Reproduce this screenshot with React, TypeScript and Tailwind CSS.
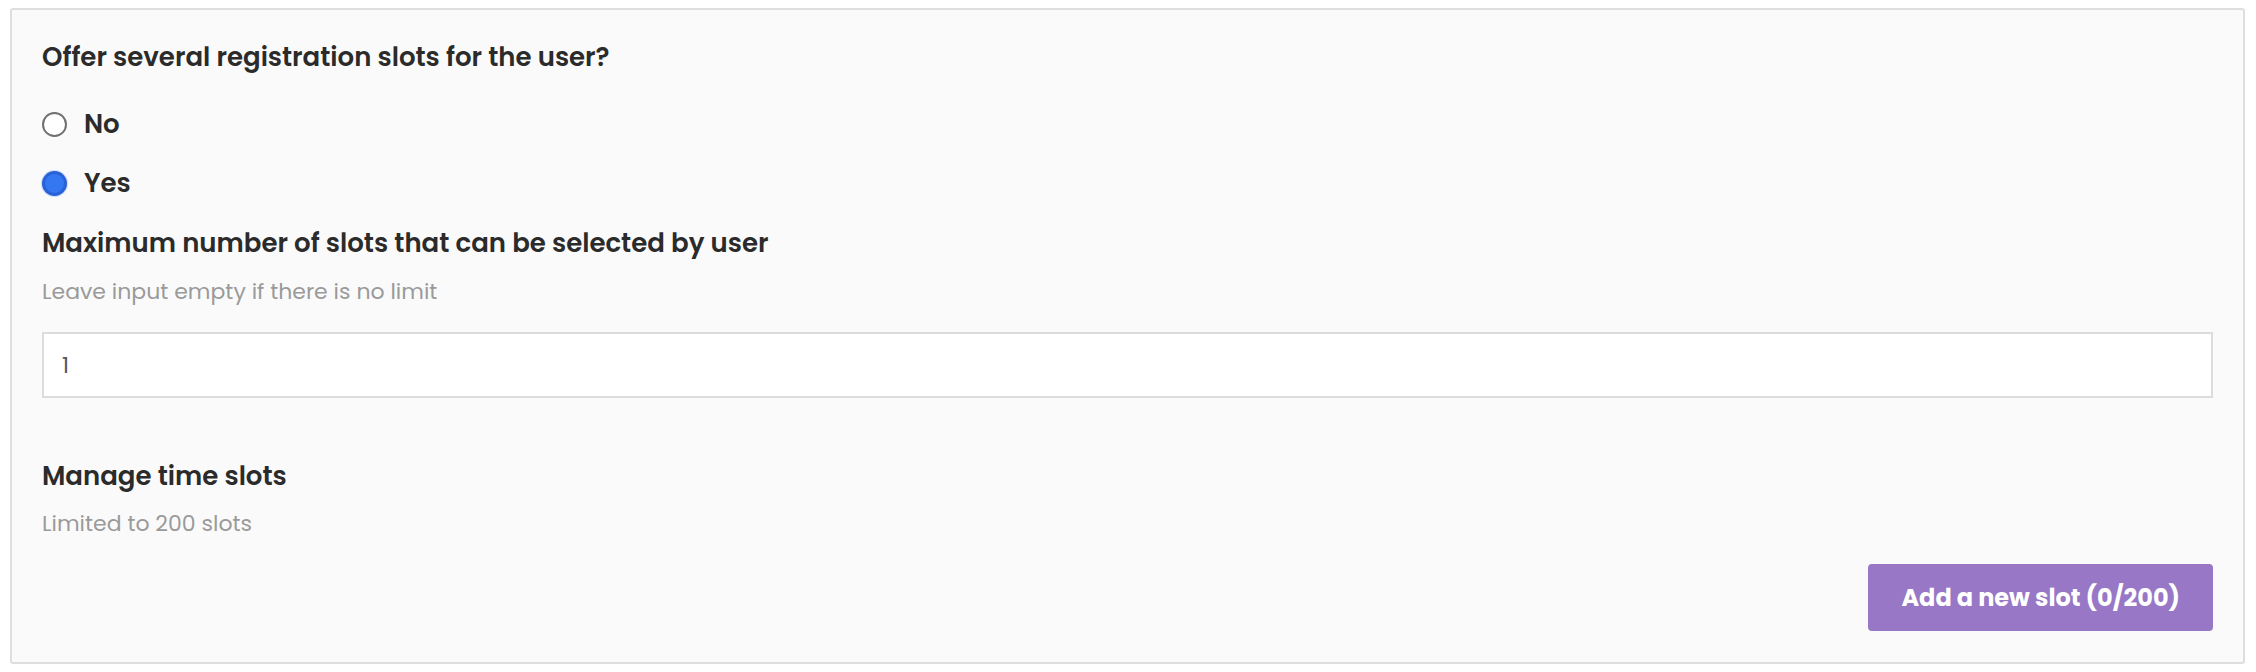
import { useState } from "react";

const font = { fontFamily: "Poppins, Inter, 'Noto Sans', sans-serif" };

function Radio({ checked, label, onSelect }: { checked: boolean; label: string; onSelect: () => void }) {
  return (
    <label className="flex h-8 cursor-pointer items-center gap-[17px]" onClick={onSelect}>
      {checked ? (
        <span className="flex h-[25px] w-[25px] items-center justify-center rounded-full bg-[#2a62d6] ring-1 ring-[#c9dafc]">
          <span className="h-[19px] w-[19px] rounded-full bg-[#3477f1]" />
        </span>
      ) : (
        <span className="h-[25px] w-[25px] rounded-full border-2 border-[#707070] bg-white" />
      )}
      <span className="text-[26px] font-semibold text-[#2b2b2b]">{label}</span>
    </label>
  );
}

export default function App() {
  const [several, setSeveral] = useState(true);
  const [max, setMax] = useState("1");

  return (
    <div className="min-h-[672px] bg-white pt-[8px] pr-[11px] pb-[9px] pl-[10px]" style={font}>
      <section className="rounded-[3px] border-2 border-[#dedede] bg-[#fafafa] px-[30px] pt-[31px] pb-[31px]">
        <h2 className="text-[26px] leading-8 font-semibold text-[#2b2b2b]">Offer several registration slots for the user?</h2>

        <div className="mt-[35px] flex flex-col gap-[27px]">
          <Radio checked={!several} label="No" onSelect={() => setSeveral(false)} />
          <Radio checked={several} label="Yes" onSelect={() => setSeveral(true)} />
        </div>

        <h3 className="mt-[28px] text-[26px] leading-8 font-semibold text-[#2b2b2b]">
          Maximum number of slots that can be selected by user
        </h3>
        <p className="mt-[19px] text-[22px] leading-7 text-[#9a9a9a]">Leave input empty if there is no limit</p>

        <input
          value={max}
          onChange={(e) => setMax(e.target.value)}
          className="mt-[26px] block h-[66px] w-full border-2 border-[#dcdcdc] bg-white px-[18px] text-[22px] text-[#555] outline-none"
        />

        <h3 className="mt-[62px] text-[26px] leading-8 font-semibold text-[#2b2b2b]">Manage time slots</h3>
        <p className="mt-[18px] text-[22px] leading-7 text-[#9a9a9a]">Limited to 200 slots</p>

        <div className="mt-[26px] flex justify-end">
          <button
            type="button"
            className="h-[67px] rounded-[4px] bg-[#9777c6] px-[33px] text-[24px] font-bold text-white"
          >
            Add a new slot (0/200)
          </button>
        </div>
      </section>
    </div>
  );
}
